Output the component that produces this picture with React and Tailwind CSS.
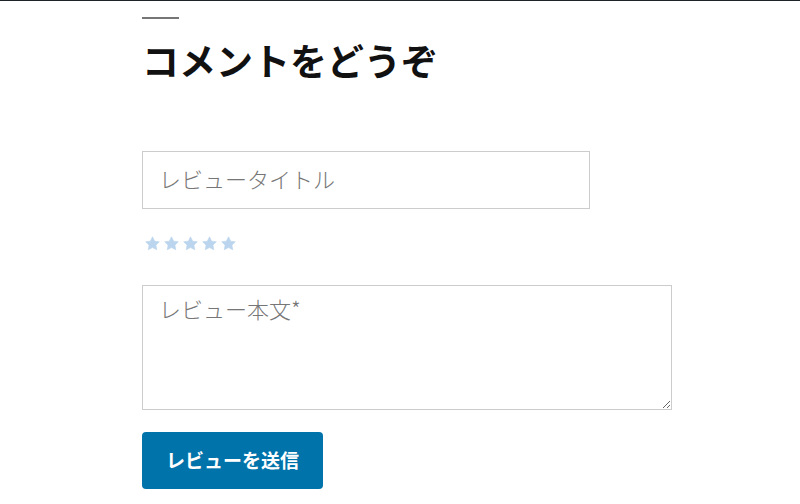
const Star = () => (
  <svg viewBox="0 0 24 24" className="h-[15px] w-[15px]" fill="#bcd5ee" stroke="#bcd5ee" strokeWidth="1" strokeLinejoin="round">
    <path d="M12 1.3L15.4 8.2 22.9 9.3 17.5 14.6 18.8 22 12 18.5 5.2 22 6.5 14.6 1.1 9.3 8.6 8.2z" />
  </svg>
);

const App = () => {
  return (
    <div
      className="min-h-[504px] border-t border-[#1d2327] bg-white"
      style={{ fontFamily: '"Noto Sans CJK JP", "Noto Sans", sans-serif' }}
    >
      <div className="pl-[142px]">
        <div className="mt-[16px] h-[2px] w-[37px] bg-[#767676]" />
        <h2 className="mt-[17px] text-[37px] font-bold leading-[48px] text-[#111]">
          コメントをどうぞ
        </h2>

        <form className="mt-[67px]">
          <input
            type="text"
            placeholder="レビュータイトル"
            className="block h-[58px] w-[448px] border border-[#cccccc] px-[16px] pb-[4px] text-[22px] font-light text-[#333] outline-none placeholder:text-[#767676]"
          />

          <div className="mt-[27px] flex gap-[4px] pl-[3px]">
            <Star />
            <Star />
            <Star />
            <Star />
            <Star />
          </div>

          <textarea
            placeholder="レビュー本文*"
            className="mt-[34px] block h-[125px] w-[530px] border border-[#cccccc] px-[16px] py-[6px] text-[22px] font-light text-[#333] outline-none placeholder:text-[#767676]"
          />

          <button
            type="button"
            className="mt-[22px] h-[57px] w-[181px] rounded-[4px] bg-[#0073aa] text-[19px] font-bold text-white"
          >
            レビューを送信
          </button>
        </form>
      </div>
    </div>
  );
};

export default App;
